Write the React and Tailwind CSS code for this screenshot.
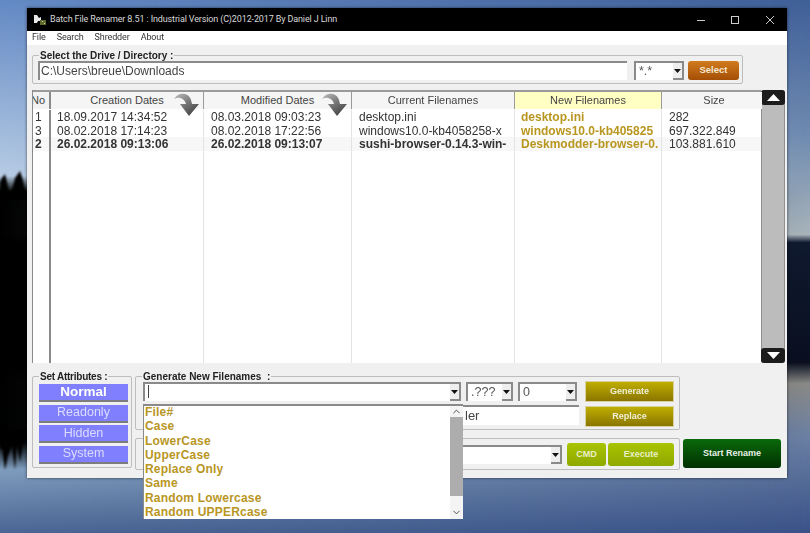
import React from "react";
import { ChevronUp, ChevronDown } from "lucide-react";

const columns = "grid grid-cols-[18px_153px_148px_163px_147px_100px]";

const rows = [
  { no: "1", created: "18.09.2017 14:34:52", modified: "08.03.2018 09:03:23", current: "desktop.ini", next: "desktop.ini", size: "282" },
  { no: "3", created: "08.02.2018 17:14:23", modified: "08.02.2018 17:22:56", current: "windows10.0-kb4058258-x", next: "windows10.0-kb405825", size: "697.322.849" },
  { no: "2", created: "26.02.2018 09:13:06", modified: "26.02.2018 09:13:07", current: "sushi-browser-0.14.3-win-", next: "Deskmodder-browser-0.", size: "103.881.610", bold: true },
];

const dropdownItems = [
  "File#",
  "Case",
  "LowerCase",
  "UpperCase",
  "Replace Only",
  "Same",
  "Random Lowercase",
  "Random UPPERcase",
];

const Wallpaper = () => (
  <svg className="fixed inset-0 -z-10 h-[533px] w-[810px]" viewBox="0 0 810 533">
    <defs>
      <linearGradient id="skyLeft" x1="0" y1="0" x2="0" y2="1">
        <stop offset="0" stopColor="#6389c4" />
        <stop offset="0.33" stopColor="#b6cbe4" />
        <stop offset="0.36" stopColor="#000" />
        <stop offset="0.83" stopColor="#000" />
        <stop offset="0.88" stopColor="#7f9dbd" />
        <stop offset="1" stopColor="#4a6593" />
      </linearGradient>
      <linearGradient id="skyRight" x1="0" y1="0" x2="0" y2="1">
        <stop offset="0" stopColor="#3f5f98" />
        <stop offset="0.25" stopColor="#6e8ab0" />
        <stop offset="0.44" stopColor="#a9b4bb" />
        <stop offset="0.455" stopColor="#101a30" />
        <stop offset="0.68" stopColor="#0a1020" />
        <stop offset="0.72" stopColor="#8a8a86" />
        <stop offset="0.82" stopColor="#6b80a4" />
        <stop offset="1" stopColor="#3a5288" />
      </linearGradient>
      <linearGradient id="across" x1="0" y1="0" x2="1" y2="0">
        <stop offset="0" stopColor="#fff" />
        <stop offset="1" stopColor="#000" />
      </linearGradient>
      <mask id="fade">
        <rect width="810" height="533" fill="url(#across)" />
      </mask>
      <filter id="soft">
        <feGaussianBlur stdDeviation="1" />
      </filter>
    </defs>
    <rect width="810" height="533" fill="url(#skyRight)" />
    <rect width="810" height="533" fill="url(#skyLeft)" mask="url(#fade)" />
    <g filter="url(#soft)" fill="#000">
      <polygon points="0,182 2,178 5,174 7,182 9,192 12,190 15,178 20,171 23,180 25,190 27,192 27,200 0,200" />
      <polygon points="0,430 27,430 27,440 24,438 22,450 20,462 17,444 15,470 12,446 8,456 5,470 2,448 0,450" />
    </g>
  </svg>
);

const AppIcon = () => (
  <svg width="14" height="12" viewBox="0 0 14 12" className="mr-[2px] shrink-0">
    <path d="M1 1h3l2 3 2-1v4H5L4 9H1z" fill="#e8e8e8" />
    <path d="M7 6h6v5H7z" fill="#5d6b2f" />
    <path d="M9 7h1v1H9zM11 9h1v1h-1z" fill="#d8d8a0" />
  </svg>
);

const WindowButtons = () => (
  <div className="ml-auto flex items-center text-[#ccc]">
    <svg width="10" height="10" viewBox="0 0 10 10" className="mr-[24px]">
      <path d="M1 5.5h8" stroke="currentColor" />
    </svg>
    <svg width="10" height="10" viewBox="0 0 10 10" className="mr-[25px]">
      <rect x="1.5" y="1.5" width="7" height="7" fill="none" stroke="currentColor" />
    </svg>
    <svg width="10" height="10" viewBox="0 0 10 10" className="mr-[12px]">
      <path d="M1 1l8 8M9 1l-8 8" stroke="currentColor" />
    </svg>
  </div>
);

// the grey swoosh arrow sitting over the date column headers
const SortArrow = () => (
  <svg width="27" height="24" viewBox="0 0 27 24" className="absolute right-[3px] top-[1px] z-10">
    <defs>
      <linearGradient id="swoosh" x1="0" y1="0" x2="0.7" y2="1">
        <stop offset="0" stopColor="#bdbdbd" />
        <stop offset="0.5" stopColor="#7a7a7a" />
        <stop offset="1" stopColor="#444" />
      </linearGradient>
    </defs>
    <path
      d="M1 6C4 1 8 0 12 1 16 2 18 5 19 11L26 11 16 23 7 11 13 11C12 6 6 3 1 6Z"
      fill="url(#swoosh)"
    />
  </svg>
);

const Caret = () => (
  <svg width="7" height="4" viewBox="0 0 7 4">
    <path d="M0 0h7L3.5 4z" fill="#111" />
  </svg>
);

const Combo = ({ className, text, children }) => (
  <div
    className={`flex h-[19px] items-stretch border-t-2 border-l-2 border-[#8a8a8a] bg-white ${className}`}
  >
    <div className="flex-1 truncate pl-[3px] text-[12.5px] leading-[16px] text-[#555]">
      {text}
      {children}
    </div>
    <div className="flex w-[11px] items-center justify-center border-r-2 border-b-2 border-[#8a8a8a] bg-[#eeeeee]">
      <Caret />
    </div>
  </div>
);

const Group = ({ title, className, legendClass = "", children }) => (
  <fieldset className={`rounded-[2px] border border-[#bdbdbd] ${className}`}>
    {title && (
      <legend className={`ml-[6px] px-[1px] text-[10px] leading-[11px] font-bold whitespace-pre text-[#222] ${legendClass}`}>
        {title}
      </legend>
    )}
    {children}
  </fieldset>
);

const AttrButton = ({ label, active }) => (
  <div
    className={`flex h-[18px] items-center justify-center border-b-2 border-[#7d7d7d] bg-[#8080ff] ${
      active ? "text-[13.5px] font-bold text-white" : "text-[12.5px] text-[#dcdcff]"
    }`}
  >
    {label}
  </div>
);

const OliveButton = ({ label }) => (
  <div className="flex h-[21px] items-center justify-center border border-[#d8d0a0] bg-gradient-to-b from-[#bfae00] to-[#8b7600] text-[9px] font-bold text-[#efefd8]">
    {label}
  </div>
);

const LimeButton = ({ label, className }) => (
  <div
    className={`flex h-[23px] items-center justify-center rounded-[3px] bg-gradient-to-b from-[#a9c400] to-[#8fa800] text-[9px] font-bold text-[#e8efc8] ${className}`}
  >
    {label}
  </div>
);

const FileTable = () => (
  <div className="relative flex h-[273px] w-[729px] flex-col border-l border-[#8a8a8a] bg-white">
    <div className={`${columns} h-[19px] shrink-0 border-t-2 border-b-2 border-[#9a9a9a] text-[11px] leading-[17px] text-[#444]`}>
      <div className="overflow-hidden border-r-2 border-[#8a8a8a] bg-[#f2f2f2] indent-[-2px] whitespace-nowrap">No</div>
      <div className="relative border-r border-[#9a9a9a] bg-[#f5f5f5] text-center">
        Creation Dates
        <SortArrow />
      </div>
      <div className="relative border-r border-[#9a9a9a] bg-[#f5f5f5] text-center">
        Modified Dates
        <SortArrow />
      </div>
      <div className="border-r border-[#9a9a9a] bg-[#f5f5f5] text-center">Current Filenames</div>
      <div className="border-r border-[#9a9a9a] bg-[#ffffc4] text-center">New Filenames</div>
      <div className="bg-[#f5f5f5] pl-[4px] text-center">Size</div>
    </div>
    <div className="h-px shrink-0" />
    {rows.map((row) => (
      <div
        key={row.no}
        className={`${columns} h-[13.7px] shrink-0 text-[12px] leading-[14px] whitespace-nowrap text-[#333] ${
          row.bold ? "bg-[#f7f7f7] font-bold" : ""
        }`}
      >
        <div className="border-r-2 border-[#8a8a8a] pl-[2px]">{row.no}</div>
        <div className="border-r border-[#e4e4e4] pl-[6px]">{row.created}</div>
        <div className="border-r border-[#e4e4e4] pl-[7px]">{row.modified}</div>
        <div className="border-r border-[#e4e4e4] pl-[7px]">{row.current}</div>
        <div className="border-r border-[#e4e4e4] pl-[6px] font-bold text-[#b8961f]">{row.next}</div>
        <div className={`pl-[7px] ${row.bold ? "font-normal" : ""}`}>{row.size}</div>
      </div>
    ))}
    <div className={`${columns} flex-1`}>
      <div className="border-r-2 border-[#8a8a8a]" />
      <div className="border-r border-[#e4e4e4]" />
      <div className="border-r border-[#e4e4e4]" />
      <div className="border-r border-[#e4e4e4]" />
      <div className="border-r border-[#e4e4e4]" />
      <div />
    </div>
  </div>
);

const ScrollBar = () => (
  <div className="flex h-[273px] w-[24px] flex-col justify-between rounded-[3px] border-x border-[#8f8f8f] bg-[#bcbcbc]">
    <div className="-mx-px flex h-[15px] items-center justify-center rounded-[3px] bg-[#1c1c1c]">
      <svg width="13" height="7" viewBox="0 0 13 7">
        <path d="M0 7L6.5 0 13 7z" fill="#fff" />
      </svg>
    </div>
    <div className="-mx-px flex h-[15px] items-center justify-center rounded-[3px] bg-[#1c1c1c]">
      <svg width="13" height="7" viewBox="0 0 13 7">
        <path d="M0 0h13L6.5 7z" fill="#fff" />
      </svg>
    </div>
  </div>
);

const DropdownList = () => (
  <div className="absolute top-[396px] left-[116px] flex h-[115px] w-[320px] border-t-2 border-l border-[#8a8a8a] bg-white">
    <div className="-mt-[1px] flex-1 pl-[1px] text-[12px] leading-[14.3px] font-bold tracking-[0.2px] text-[#b8961f]">
      {dropdownItems.map((item) => (
        <div key={item}>{item}</div>
      ))}
    </div>
    <div className="flex w-[13px] flex-col items-center bg-[#f4f4f4] text-[#444]">
      <ChevronUp size={11} strokeWidth={2} />
      <div className="h-[79px] w-full bg-[#adadad]" />
      <div className="flex-1" />
      <ChevronDown size={11} strokeWidth={2} className="my-[1px]" />
    </div>
  </div>
);

export default function App() {
  return (
    <div className="h-[533px] w-[810px] overflow-hidden pt-[8px] pl-[27px] font-['Liberation_Sans',Arial,sans-serif]">
      <Wallpaper />
      <div className="relative flex h-[470px] w-[760px] flex-col bg-[#f0f0f0] shadow-[0_0_3px_rgba(0,0,0,0.6)]">
        <div className="flex h-[23px] items-center bg-black pl-[6px] font-['Roboto',sans-serif] text-[9px] tracking-[-0.13px] text-[#d8d8d8]">
          <AppIcon />
          <span className="ml-px">Batch File Renamer 8.51 : Industrial Version (C)2012-2017 By Daniel J Linn</span>
          <WindowButtons />
        </div>
        <div className="flex h-[14px] items-center gap-[11px] bg-white pl-[5px] font-['Roboto',sans-serif] text-[9px] tracking-[-0.12px] text-[#333]">
          <span>File</span>
          <span>Search</span>
          <span>Shredder</span>
          <span>About</span>
        </div>

        <div className="flex flex-col pl-[5px]">
          <Group title="Select the Drive / Directory :" className="mt-[5px] h-[34px] w-[711px]">
            <div className="flex items-center pl-[5px]">
              <div className="h-[19px] w-[589px] border-t-2 border-l-2 border-[#8a8a8a] bg-white pl-[1px] text-[12px] leading-[16px] text-[#444]">
                C:\Users\breue\Downloads
              </div>
              <Combo className="ml-[7px] w-[50px]" text="*.*" />
              <div className="ml-[4px] flex h-[19px] w-[51px] items-center justify-center rounded-[3px] bg-gradient-to-b from-[#d27c1e] to-[#a34e05] text-[9.5px] font-bold text-[#f4e6d0]">
                Select
              </div>
            </div>
          </Group>

          <div className="mt-[6px] flex">
            <FileTable />
            <ScrollBar />
          </div>

          <div className="mt-[8px] flex">
            <Group title="Set Attributes :" legendClass="tracking-[-0.25px]" className="h-[97px] w-[100px]">
              <div className="flex flex-col gap-[2.5px] pt-[2px] pr-[3px] pl-[6px]">
                <AttrButton label="Normal" active />
                <AttrButton label="Readonly" />
                <AttrButton label="Hidden" />
                <AttrButton label="System" />
              </div>
            </Group>

            <div className="ml-[3px] flex w-[545px] flex-col">
              <Group title="Generate New Filenames  :" className="h-[59px]">
                <div className="flex pl-[7px]">
                  <div className="flex w-[436px] flex-col">
                    <div className="flex">
                      <Combo className="w-[318px]">
                        <span className="mt-[1px] inline-block h-[13px] w-px bg-[#444] align-top" />
                      </Combo>
                      <Combo className="ml-[5px] w-[47px]" text=".???" />
                      <Combo className="ml-[5px] w-[59px]" text="0" />
                    </div>
                    <div className="mt-[4px] h-[20px] border-t-2 border-l-2 border-[#8a8a8a] bg-white pl-[320px] text-[13px] leading-[17px] text-[#444]">
                      ler
                    </div>
                  </div>
                  <div className="-mt-[1px] ml-[6px] flex w-[89px] flex-col gap-[4px]">
                    <OliveButton label="Generate" />
                    <OliveButton label="Replace" />
                  </div>
                </div>
              </Group>
              <Group className="mt-[8px] h-[32px]">
                <div className="flex items-center pt-[4px] pl-[7px]">
                  <Combo className="w-[419px]" />
                  <LimeButton label="CMD" className="ml-[5px] w-[39px]" />
                  <LimeButton label="Execute" className="ml-[2px] w-[66px]" />
                </div>
              </Group>
            </div>

            <div className="mb-[2px] ml-[3px] flex h-[29px] w-[98px] items-center justify-center self-end rounded-[3px] bg-gradient-to-b from-[#0a6a0a] to-[#023002] text-[9px] font-bold text-[#e8efe8]">
              Start Rename
            </div>
          </div>
        </div>

        <DropdownList />
      </div>
    </div>
  );
}
